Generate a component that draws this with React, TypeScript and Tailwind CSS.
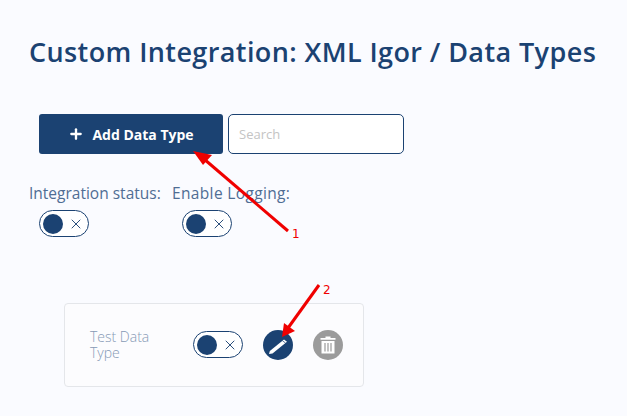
import React from 'react';
import { Plus, X } from 'lucide-react';

const Toggle = () => (
  <div className="flex h-[27px] w-[50px] items-center rounded-full border border-[#1b4272] bg-white pl-[3px]">
    <div className="h-5 w-5 rounded-full bg-[#1b4272]" />
    <X className="ml-[5px] h-4 w-4 text-[#1b4272]" strokeWidth={1.4} />
  </div>
);

const PencilIcon = () => (
  <svg viewBox="0 0 30 30" className="h-[30px] w-[30px]">
    <circle cx="15" cy="15" r="15" fill="#1b4272" />
    <path d="M6 24 L6.8 21 L21 9.5 L24 11.8 L9.5 23.5 Z" fill="#fff" />
    <path d="M19.5 10.8 L22.5 13" stroke="#1b4272" strokeWidth="0.7" />
  </svg>
);

const TrashIcon = () => (
  <svg viewBox="0 0 30 30" className="h-[30px] w-[30px]">
    <circle cx="15" cy="15" r="15" fill="#9b9b9b" />
    <path d="M12.5 6.5 h5 v1.5 h5 v1.8 h-15 v-1.8 h5 Z" fill="#fff" />
    <path d="M8.5 11 h13 v12.5 h-13 Z" fill="#fff" />
    <path d="M12 13 v8.5 M15 13 v8.5 M18 13 v8.5" stroke="#9b9b9b" strokeWidth="1.2" />
  </svg>
);

const Annotations = () => (
  <svg className="pointer-events-none absolute left-0 top-0" width="627" height="416" viewBox="0 0 627 416">
    <path d="M288 231 L204 159" stroke="#f00000" strokeWidth="3" fill="none" />
    <path d="M193 151 L212 155 L203 165 Z" fill="#f00000" />
    <path d="M319 285 L288 328" stroke="#f00000" strokeWidth="3" fill="none" />
    <path d="M282 337 L284 323 L295 331 Z" fill="#f00000" />
  </svg>
);

export default function App() {
  return (
    <div className="relative h-[416px] w-[627px] overflow-hidden bg-[#fafbff] font-['Open_Sans',sans-serif]">
      <div className="pl-[29px] pt-[35px]">
        <h1 className="whitespace-nowrap text-[27px] font-semibold leading-[34px] tracking-[0.4px] text-[#1b4272]">
          Custom Integration: XML Igor / Data Types
        </h1>

        <div className="ml-[10px] mt-[45px] flex gap-[5px]">
          <button className="flex h-10 w-[184px] items-center justify-center gap-[8px] rounded-[3px] bg-[#1b4272] text-[14px] font-bold text-white">
            <Plus className="h-[16px] w-[16px]" strokeWidth={3.5} />
            Add Data Type
          </button>
          <div className="flex h-10 w-[176px] items-center rounded-[5px] border border-[#1b4272] bg-white pl-[10px] pt-[1px] text-[13px] text-[#c4c4c4]">
            Search
          </div>
        </div>

        <div className="mt-[29px] flex gap-[10px] text-[15.5px] leading-5 text-[#4f6d94]">
          <div className="w-[133px]">
            <div className="whitespace-nowrap">Integration status:</div>
            <div className="ml-[10px] mt-[7px]"><Toggle /></div>
          </div>
          <div>
            <div className="whitespace-nowrap tracking-[0.35px]">Enable Logging:</div>
            <div className="ml-[10px] mt-[7px]"><Toggle /></div>
          </div>
        </div>

        <div className="ml-[35px] mt-[66px] flex h-[84px] w-[300px] items-center rounded-[4px] border border-[#e4e6ea] bg-[#fcfcfe] pl-[25px]">
          <div className="w-[103px] pr-[30px] text-[14px] font-light leading-[16px] text-[#8599b5]">Test Data Type</div>
          <div className="-mt-[1px]"><Toggle /></div>
          <div className="ml-5"><PencilIcon /></div>
          <div className="ml-5"><TrashIcon /></div>
        </div>
      </div>

      <Annotations />
      <span className="absolute left-[292px] top-[227px] font-['DejaVu_Sans',sans-serif] text-[12px] leading-[15px] text-[#f00000]">1</span>
      <span className="absolute left-[323px] top-[283px] font-['DejaVu_Sans',sans-serif] text-[12px] leading-[15px] text-[#f00000]">2</span>
    </div>
  );
}
